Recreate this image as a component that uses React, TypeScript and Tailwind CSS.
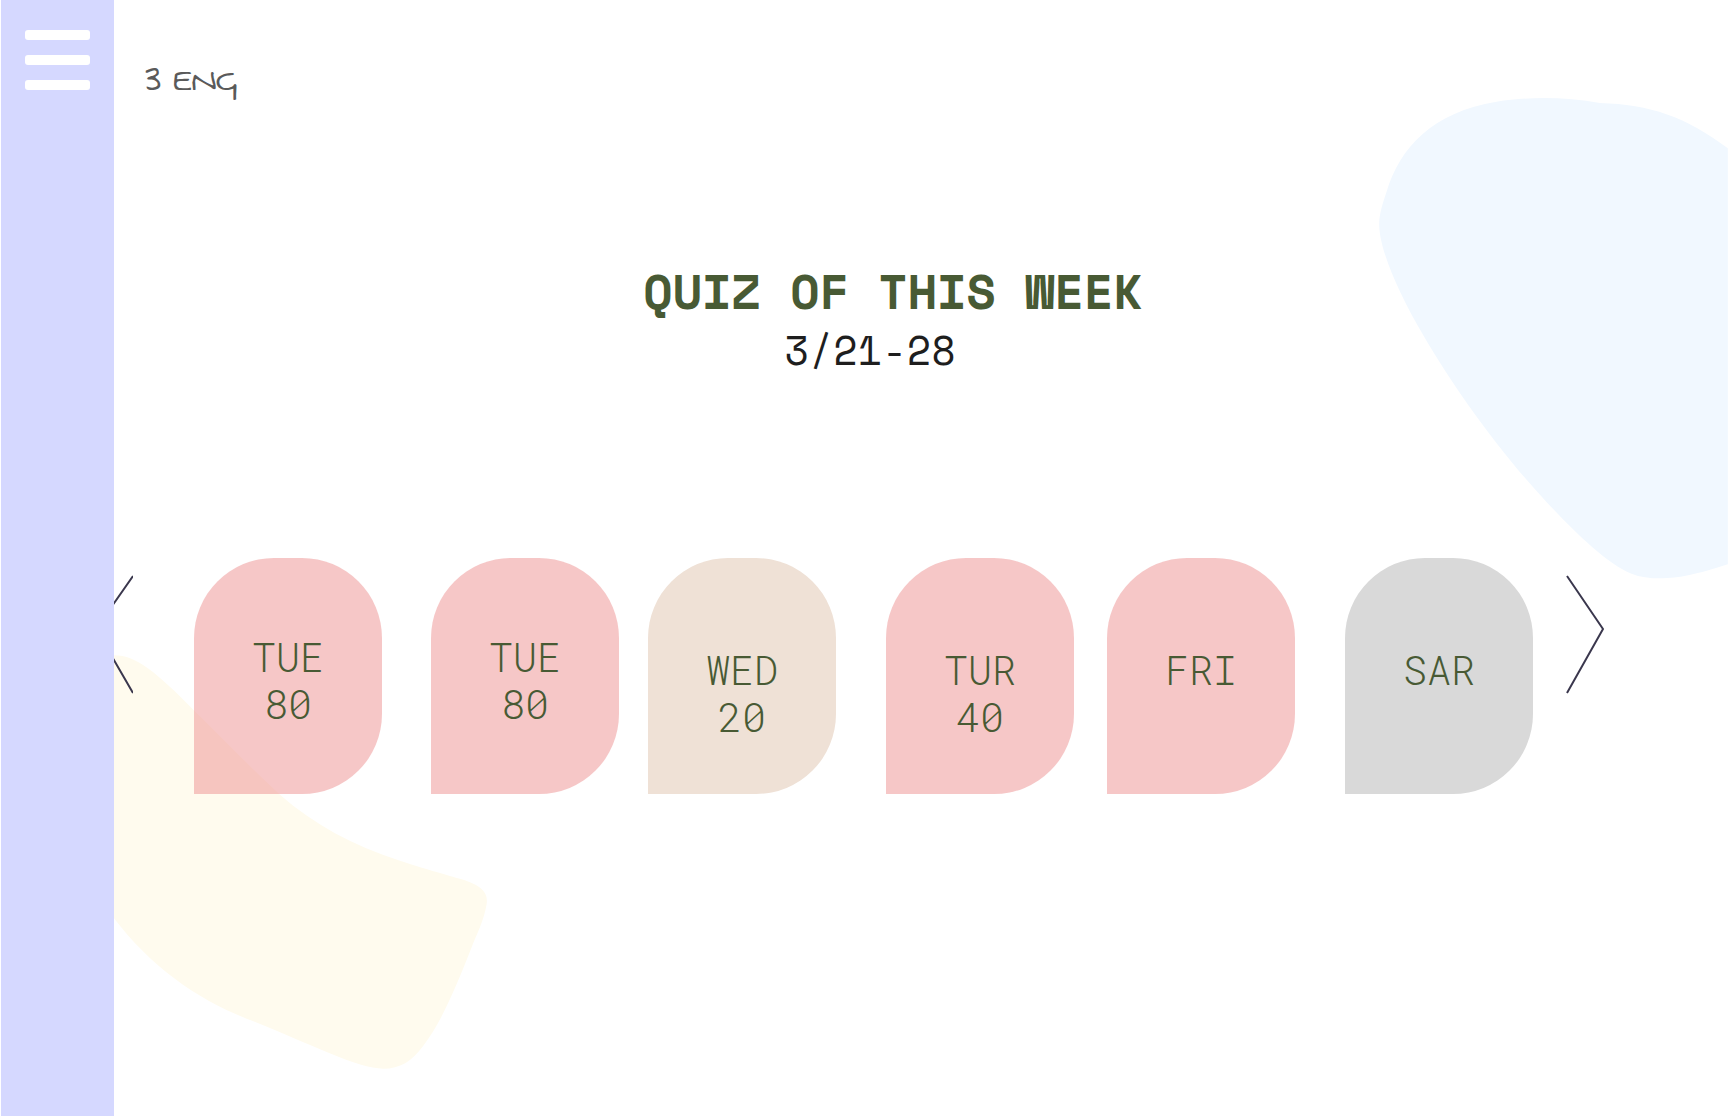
const days = [
  { day: 'TUE', score: '80', look: 'ml-[61px] pt-2 bg-[#ee8f8f]/50' },
  { day: 'TUE', score: '80', look: 'ml-[49px] pt-2 bg-[#ee8f8f]/50' },
  { day: 'WED', score: '20', look: 'ml-[29px] pt-[34px] bg-[#efe1d6]' },
  { day: 'TUR', score: '40', look: 'ml-[50px] pt-[34px] bg-[#ee8f8f]/50' },
  { day: 'FRI', score: '', look: 'ml-[33px] pt-[34px] bg-[#ee8f8f]/50' },
  { day: 'SAR', score: '', look: 'ml-[50px] pt-[34px] bg-[#d9d9d9]' },
];

function Backdrop() {
  return (
    <>
      <svg aria-hidden="true" className="absolute top-[97px] right-0" width="349" height="482" viewBox="58 50 1046 1446">
        <path
          fill="#f1f8ff"
          d="M410 64C510 48 620 50 720 68C870 72 980 110 1104 204V1452C1010 1482 960 1494 900 1494C870 1494 840 1490 815 1480C740 1450 640 1350 560 1265C420 1115 280 920 190 764C120 645 58 510 58 430C58 400 70 365 80 335C120 200 220 95 410 64Z"
        />
      </svg>
      <svg aria-hidden="true" className="absolute top-[654px] left-[114px]" width="374" height="416" viewBox="42 40 1122 1248">
        <path
          fill="#fffbee"
          d="M42 44C110 44 170 96 283 210C370 294 440 370 540 462C640 550 760 615 900 660C990 690 1040 702 1085 716C1145 735 1165 756 1160 790C1152 840 1130 880 1115 920C1060 1060 1020 1150 970 1215C935 1262 900 1284 850 1284C770 1284 620 1204 440 1134C290 1076 150 975 42 833Z"
        />
      </svg>
    </>
  );
}

export default function App() {
  return (
    <div className="relative flex min-h-screen overflow-hidden bg-white pb-px pl-px">
      <Backdrop />
      <aside className="relative z-10 w-[113px] shrink-0 bg-[#d5d8ff]">
        <button type="button" aria-label="Open menu" className="mt-[30px] ml-6 flex w-[65px] flex-col gap-[15px]">
          <span className="h-[10px] w-full rounded-[3px] bg-white" />
          <span className="h-[10px] w-full rounded-[3px] bg-white" />
          <span className="h-[10px] w-full rounded-[3px] bg-white" />
        </button>
      </aside>
      <main className="relative min-w-0 flex-1 pt-[55px]">
        <p className="pl-[31px] font-['Swanky_and_Moo_Moo','DejaVu_Sans',cursive] text-[40px] leading-[52px] text-[#5a5a5a]">3 ENG</p>
        <header className="mt-[151px] text-center font-['Space_Mono','Liberation_Mono',monospace]">
          <h1 className="pr-[56px] text-[48px] leading-[66px] font-bold text-[#485a34]">QUIZ OF THIS WEEK</h1>
          <p className="pr-[102px] text-[40px] leading-[52px] text-[#1e1e1e]">3/21-28</p>
        </header>
        <section aria-label="Quiz scores by day" className="mt-[182px] mr-[124px] -ml-[19px] flex">
          <button type="button" aria-label="Previous week" className="mt-[17px] h-[119px] w-[38px] shrink-0">
            <svg width="38" height="119" viewBox="0 0 38 119" fill="none" stroke="#3a374d" strokeWidth="2">
              <path d="M38 1L1 54L38 118" />
            </svg>
          </button>
          {days.map((d, i) => (
            <article
              key={i}
              className={`flex h-[236px] min-w-0 flex-1 flex-col items-center justify-center rounded-[80px] rounded-bl-none font-['Roboto_Mono','DejaVu_Sans_Mono',monospace] text-[40px] leading-[47px] font-light text-[#485a34] ${d.look}`}
            >
              <h2>{d.day}</h2>
              <p className="min-h-[47px]">{d.score}</p>
            </article>
          ))}
          <button type="button" aria-label="Next week" className="mt-[17px] ml-[33px] h-[119px] w-[38px] shrink-0">
            <svg width="38" height="119" viewBox="0 0 38 119" fill="none" stroke="#3a374d" strokeWidth="2">
              <path d="M1 1L37 54L1 118" />
            </svg>
          </button>
        </section>
      </main>
    </div>
  );
}
